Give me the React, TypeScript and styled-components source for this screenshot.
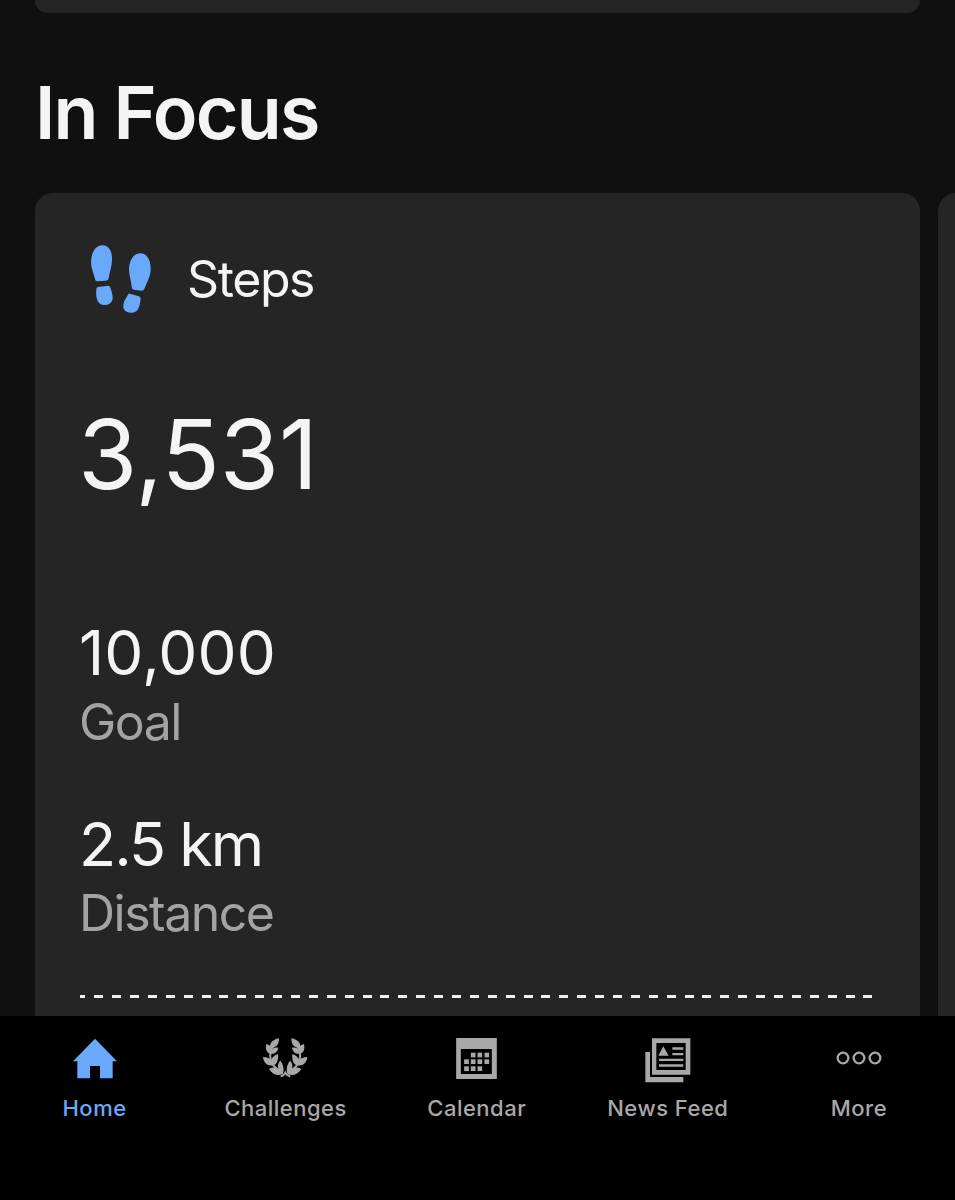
import React from "react";
import styled, { createGlobalStyle } from "styled-components";

const GlobalStyle = createGlobalStyle`
  * { box-sizing: border-box; }
  body { margin: 0; background: #000; }
`;

const Screen = styled.div`
  width: 955px;
  height: 1200px;
  display: flex;
  flex-direction: column;
  overflow: hidden;
  background: #101010;
  color: #f4f4f4;
  font-family: Inter, "Liberation Sans", sans-serif;
`;

const Feed = styled.main`
  height: 1016px;
  flex: none;
  overflow: hidden;
  padding-left: 35px;
`;

const PreviousCard = styled.div`
  width: 885px;
  height: 13px;
  background: #252525;
  border-radius: 0 0 18px 18px;
`;

const Heading = styled.h1`
  margin: 67px 0 47px;
  font-size: 73.5px;
  line-height: 66px;
  font-weight: 600;
  letter-spacing: -1.75px;
  white-space: nowrap;
`;

const Carousel = styled.div`
  display: flex;
  gap: 18px;
`;

const Card = styled.section`
  flex: none;
  width: 885px;
  height: 900px;
  padding: 50px 45px 0;
  background: #252525;
  border-radius: 18px;
`;

const CardHeader = styled.header`
  display: flex;
  align-items: center;
  gap: 35px;
  height: 71px;
  padding-left: 10px;
`;

interface TextProps {
  $size: number;
  $line: number;
  $top?: number;
  $left?: number;
  $spacing?: number;
  $muted?: boolean;
}

const Text = styled.div<TextProps>`
  margin-top: ${(p) => p.$top ?? 0}px;
  margin-left: ${(p) => p.$left ?? 0}px;
  font-size: ${(p) => p.$size}px;
  line-height: ${(p) => p.$line}px;
  letter-spacing: ${(p) => p.$spacing ?? 0}px;
  color: ${(p) => (p.$muted ? "#a3a3a3" : "#f4f4f4")};
  white-space: nowrap;
`;

const DashedRule = styled.div`
  width: 793px;
  height: 3px;
  margin-top: 52px;
  background: repeating-linear-gradient(90deg, #f0f0f0 0 9px, transparent 9px 17.89px);
  background-position: -3.7px 0;
  background-size: 820px 3px;
`;

const TabBar = styled.nav`
  display: grid;
  grid-template-columns: repeat(5, 191.1px);
  width: 956px;
  height: 184px;
  margin-left: -1px;
  background: #000;
`;

const Tab = styled.div<{ $active?: boolean }>`
  display: flex;
  flex-direction: column;
  align-items: center;
  padding-top: 22px;
  color: ${(p) => (p.$active ? "#6aa8fb" : "#a8a8a8")};
`;

const IconSlot = styled.div<{ $drop: number }>`
  height: 50px;
  display: flex;
  align-items: flex-start;
  padding-top: ${(p) => p.$drop}px;
`;

const TabLabel = styled.span`
  margin-top: 5px;
  font-size: 22px;
  line-height: 30px;
  font-weight: 450;
  letter-spacing: 0.5px;
  white-space: nowrap;
`;

const StepsIcon = () => (
  <svg width="62" height="70" viewBox="60 40 186 210" fill="#6aa8fb">
    <path d="M98 44C117 44 127 62 126 89C125 111 118 128 116 143Q115 150 108 150L82 152Q76 152 75 145C71 128 63 112 63 94C64 64 77 44 98 44Z" />
    <path d="M84 169L115 165Q120 165 121 171C124 180 128 190 128 200C128 214 119 223 106 223C89 223 80 212 79 195Q78 185 79 176Q79 170 84 169Z" />
    <path d="M212 68C231 69 242 88 242 114C242 137 231 154 224 173Q221 181 214 180L192 177Q185 176 185 168C184 151 177 136 177 116C178 87 192 67 212 68Z" />
    <path d="M180 189L207 197Q212 199 212 205C211 213 210 222 206 231C202 242 193 247 182 246C167 245 158 236 160 222C161 212 168 203 173 194Q175 188 180 189Z" />
  </svg>
);

const HomeIcon = () => (
  <svg width="44" height="42" viewBox="68 54 132 126" fill="currentColor">
    <path d="M134 56L200 124H187V175H149V138H119V175H81V124H68Z" />
  </svg>
);

const Branch = () => (
  <>
    <path d="M192 53C192 68 187 78 174 81L166 82C162 68 172 57 192 53Z" />
    <path d="M154 70C166 74 171 79 172 84C177 81 183 80 190 81C188 94 179 101 166 99C154 96 151 86 154 70Z" />
    <path d="M144 109C156 110 165 113 169 117C172 109 179 103 189 100C191 117 186 131 175 134C157 137 146 127 144 109Z" />
    <path d="M162 145C173 139 184 140 190 144C187 134 190 125 196 120C206 132 209 152 202 161C187 167 171 160 162 145Z" />
    <path d="M176 73Q162 93 167 117Q173 138 195 151" fill="none" stroke="currentColor" strokeWidth="6" />
  </>
);

const LaurelIcon = () => (
  <svg width="46" height="40" viewBox="144 52 138 120" fill="currentColor" overflow="visible">
    <Branch />
    <g transform="translate(421 0) scale(-1 1)">
      <Branch />
    </g>
    <path d="M197 168Q206 165 211 156Q216 165 226 168" fill="none" stroke="currentColor" strokeWidth="6" />
  </svg>
);

const CalendarIcon = () => (
  <svg width="41" height="41" viewBox="108.5 54 123 123" fill="currentColor">
    <path fillRule="evenodd" d="M109 54H231V177H109ZM123 87V162H216V87Z" />
    {[
      [153, 98], [173, 98], [194, 98],
      [133, 118], [153, 118], [173, 118], [194, 118],
      [133, 139], [153, 139], [173, 139],
    ].map(([x, y]) => (
      <rect key={`${x}-${y}`} x={x} y={y} width="14" height="14" />
    ))}
  </svg>
);

const NewsIcon = () => (
  <svg width="46" height="45" viewBox="134 53 138 135" fill="currentColor">
    <path fillRule="evenodd" d="M155 54H270V163H155ZM168 68V149H256V68Z" />
    <path d="M135 95H149V170H249V186H135Z" />
    <path d="M189 78L205 106H174ZM216 81H249V88H216ZM216 98H249V105H216ZM176 115H249V122H176ZM176 132H249V139H176Z" />
  </svg>
);

const MoreIcon = () => (
  <svg width="46" height="16" viewBox="50 91 138 48" fill="none" stroke="currentColor" strokeWidth="7">
    <circle cx="71" cy="115" r="16" />
    <circle cx="119" cy="115" r="16" />
    <circle cx="167" cy="115" r="16" />
  </svg>
);

const tabs = [
  { label: "Home", icon: <HomeIcon />, drop: 0, active: true },
  { label: "Challenges", icon: <LaurelIcon />, drop: 0 },
  { label: "Calendar", icon: <CalendarIcon />, drop: 0 },
  { label: "News Feed", icon: <NewsIcon />, drop: 0 },
  { label: "More", icon: <MoreIcon />, drop: 12 },
];

export default function App() {
  return (
    <Screen>
      <GlobalStyle />
      <Feed>
        <PreviousCard />
        <Heading>In Focus</Heading>
        <Carousel>
          <Card>
            <CardHeader>
              <StepsIcon />
              <Text $size={50} $line={60} $spacing={-1.4}>Steps</Text>
            </CardHeader>
            <Text $size={96} $line={100} $top={90} $left={-2} $spacing={0}>3,531</Text>
            <Text $size={62} $line={70} $top={114} $left={-1} $spacing={0.1}>10,000</Text>
            <Text $size={50} $line={60} $top={4} $left={-1} $spacing={-1.5} $muted>Goal</Text>
            <Text $size={61} $line={70} $top={57} $left={-1} $spacing={-2}>2.5 km</Text>
            <Text $size={50} $line={60} $top={4} $left={-1} $spacing={-1.5} $muted>Distance</Text>
            <DashedRule />
          </Card>
          <Card />
        </Carousel>
      </Feed>
      <TabBar>
        {tabs.map(({ label, icon, drop, active }) => (
          <Tab key={label} $active={active}>
            <IconSlot $drop={drop}>{icon}</IconSlot>
            <TabLabel>{label}</TabLabel>
          </Tab>
        ))}
      </TabBar>
    </Screen>
  );
}
